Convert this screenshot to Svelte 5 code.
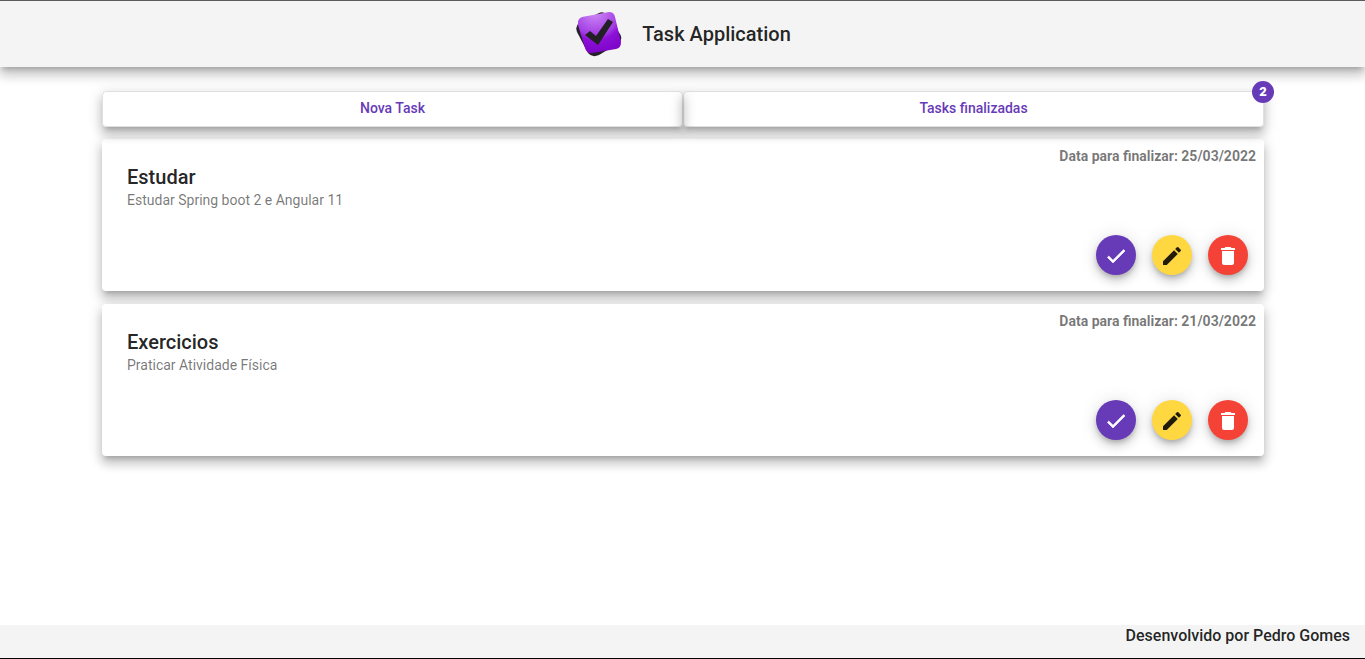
<script>
  let tasks = $state([
    { id: 1, title: 'Estudar', description: 'Estudar Spring boot 2 e Angular 11', due: '25/03/2022' },
    { id: 2, title: 'Exercicios', description: 'Praticar Atividade Física', due: '21/03/2022' }
  ]);
  let finished = $state(2);

  function remove(id) {
    tasks = tasks.filter((task) => task.id !== id);
  }

  function finish(id) {
    remove(id);
    finished += 1;
  }
</script>

<div class="page">
  <header class="toolbar">
    <svg class="logo" viewBox="0 0 48 48" aria-hidden="true">
      <defs>
        <radialGradient id="tile" cx="0.4" cy="0" r="1.1">
          <stop offset="0" stop-color="#d08cf5" />
          <stop offset="0.5" stop-color="#a23de4" />
          <stop offset="0.62" stop-color="#8c10d6" />
          <stop offset="1" stop-color="#7a00c4" />
        </radialGradient>
      </defs>
      <path fill="#25202a" d="M5 13 25 3Q30 1 33 5L46 24Q49 29 45 33L25 45Q18 48 14 43L3 22Q1 16 5 13Z" />
      <path fill="url(#tile)" d="M8 7 35 2Q40 2 41 7L47 32Q47 38 42 39L18 43Q13 44 11 38L4 15Q3 9 8 7Z" />
      <path fill="#222025" d="M11 25 16 21 22 26 34 9 39 12 24 35Z" />
    </svg>
    <h1>Task Application</h1>
  </header>

  <main>
    <div class="actions">
      <button class="stroked" type="button">Nova Task</button>
      <button class="stroked" type="button">Tasks finalizadas<span class="badge">{finished}</span></button>
    </div>

    {#each tasks as task (task.id)}
      <article class="card">
        <p class="due">Data para finalizar: {task.due}</p>
        <div class="info">
          <h2>{task.title}</h2>
          <p>{task.description}</p>
        </div>
        <div class="tools">
          <button class="fab done" type="button" aria-label="Finalizar" onclick={() => finish(task.id)}>
            <svg viewBox="0 0 24 24"><path stroke="currentColor" stroke-width="0.6" d="M9 16.17 4.83 12l-1.42 1.41L9 19 21 7l-1.41-1.41z" /></svg>
          </button>
          <button class="fab edit" type="button" aria-label="Editar">
            <svg viewBox="0 0 24 24"><path d="M3 17.25V21h3.75L17.81 9.94l-3.75-3.75L3 17.25zM20.71 7.04a1 1 0 0 0 0-1.41l-2.34-2.34a1 1 0 0 0-1.41 0l-1.83 1.83 3.75 3.75 1.83-1.83z" /></svg>
          </button>
          <button class="fab delete" type="button" aria-label="Excluir" onclick={() => remove(task.id)}>
            <svg viewBox="0 0 24 24"><path d="M6 19c0 1.1.9 2 2 2h8c1.1 0 2-.9 2-2V7H6v12zM19 4h-3.500l-1-1h-5l-1 1H5v2h14V4z" /></svg>
          </button>
        </div>
      </article>
    {/each}
  </main>

  <footer>Desenvolvido por Pedro Gomes</footer>
</div>

<style>
  .page {
    --elevation: 0 5px 5px -3px rgba(0, 0, 0, 0.2), 0 8px 10px 1px rgba(0, 0, 0, 0.14),
      0 3px 14px 2px rgba(0, 0, 0, 0.12);
    box-sizing: border-box;
    min-height: 100vh;
    display: flex;
    flex-direction: column;
    background: #fff;
    color: rgba(0, 0, 0, 0.87);
    font-family: Roboto, 'Liberation Sans', sans-serif;
  }

  h1,
  h2,
  p {
    margin: 0;
  }

  .toolbar {
    display: flex;
    align-items: center;
    justify-content: center;
    gap: 20px;
    height: 66px;
    border-top: 1px solid #5b585e;
    background: #f4f4f4;
    box-shadow: var(--elevation);
  }

  .logo {
    width: 48px;
    height: 48px;
  }

  h1,
  h2 {
    font-size: 20px;
    font-weight: 500;
    line-height: 24px;
  }

  main {
    flex: 1;
    display: flex;
    flex-direction: column;
    gap: 13px;
    padding: 24px 101px 24px 102px;
  }

  .actions {
    display: grid;
    grid-template-columns: 1fr 1fr;
    margin-bottom: -1px;
  }

  .stroked {
    position: relative;
    height: 36px;
    padding: 0 16px 2px;
    border: 1px solid rgba(0, 0, 0, 0.12);
    border-radius: 4px;
    background: transparent;
    box-shadow: var(--elevation);
    color: #673ab7;
    font: 500 14px/32px Roboto, 'Liberation Sans', sans-serif;
    cursor: pointer;
  }

  .badge {
    position: absolute;
    top: -11px;
    right: -11px;
    width: 22px;
    height: 22px;
    border-radius: 50%;
    background: #673ab7;
    color: #fff;
    font-size: 13px;
    font-weight: 900;
    line-height: 22px;
    text-align: center;
  }

  .card {
    display: flex;
    flex-direction: column;
    box-sizing: border-box;
    height: 152px;
    padding: 8px;
    border-radius: 4px;
    background: #fff;
    box-shadow: var(--elevation);
  }

  .due {
    align-self: flex-end;
    color: rgba(0, 0, 0, 0.54);
    font-size: 14px;
    font-weight: 700;
    line-height: 18px;
  }

  .info {
    padding-left: 17px;
  }

  .info p {
    color: rgba(0, 0, 0, 0.54);
    font-size: 14px;
    font-weight: 400;
    line-height: 22px;
  }

  .tools {
    display: flex;
    justify-content: flex-end;
    gap: 16px;
    margin-top: auto;
    padding: 8px;
  }

  .fab {
    display: grid;
    place-items: center;
    width: 40px;
    height: 40px;
    padding: 2px 1px 0 0;
    border: 0;
    border-radius: 50%;
    box-shadow: 0 3px 5px -1px rgba(0, 0, 0, 0.2), 0 6px 10px 0 rgba(0, 0, 0, 0.14),
      0 1px 18px 0 rgba(0, 0, 0, 0.12);
    color: #fff;
    cursor: pointer;
  }

  .fab svg {
    width: 24px;
    height: 24px;
    fill: currentColor;
  }

  .done {
    background: #673ab7;
  }

  .edit {
    background: #ffd740;
    color: rgba(0, 0, 0, 0.87);
  }

  .delete {
    background: #f44336;
  }

  footer {
    box-sizing: border-box;
    height: 34px;
    padding: 0 15px;
    border-bottom: 1px solid #000;
    background: #f4f4f4;
    font-size: 16px;
    font-weight: 500;
    line-height: 22px;
    text-align: right;
  }
</style>
